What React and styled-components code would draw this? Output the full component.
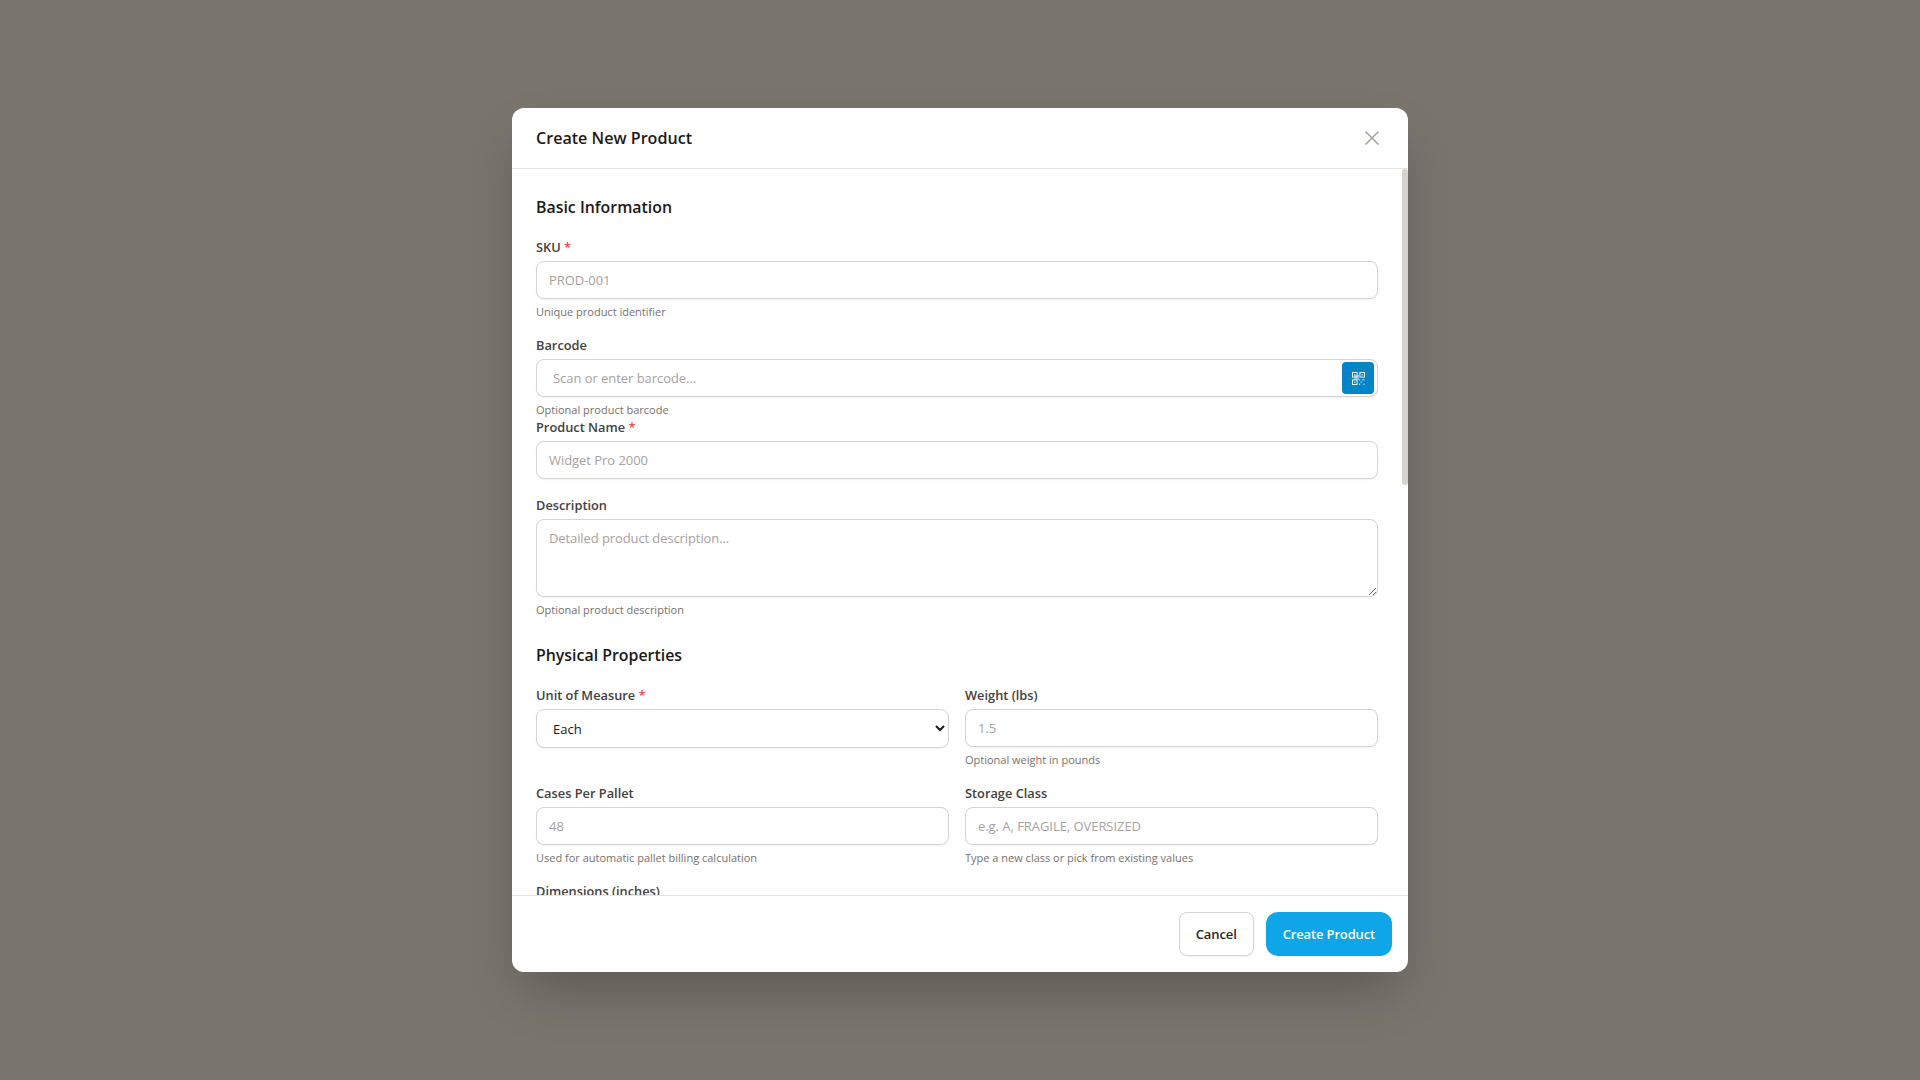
import React from "react";
import styled, { createGlobalStyle } from "styled-components";

const GlobalStyle = createGlobalStyle`
  html, body {
    margin: 0;
    padding: 0;
    height: 100%;
  }
  * {
    box-sizing: border-box;
  }
  body {
    font-family: "Open Sans", "Noto Sans", sans-serif;
  }
`;

function QrIcon() {
  return (
    <svg width="13" height="13" viewBox="0 0 13 13" fill="none">
      <rect x="2" y="3" width="5" height="5" fill="#fff" fillOpacity="0.45" />
      <g stroke="#fff" strokeWidth="0.9">
        <rect x="0.5" y="0.5" width="4.6" height="4.6" />
        <rect x="7.9" y="0.5" width="4.6" height="4.6" />
        <rect x="0.5" y="7.9" width="4.6" height="4.6" />
      </g>
      <g fill="#fff">
        <rect x="2.2" y="2.2" width="1.2" height="1.2" />
        <rect x="9.6" y="2.2" width="1.2" height="1.2" />
        <rect x="2.2" y="9.6" width="1.2" height="1.2" />
        <rect x="7" y="7.4" width="1.2" height="1.2" fillOpacity="0.8" />
        <rect x="10" y="7.4" width="2.6" height="1" fillOpacity="0.8" />
        <rect x="8.6" y="9.6" width="1.2" height="1.2" fillOpacity="0.8" />
        <rect x="7" y="11.6" width="1.2" height="1.2" fillOpacity="0.8" />
        <rect x="11.4" y="11.6" width="1.2" height="1.2" fillOpacity="0.8" />
      </g>
    </svg>
  );
}

function Field({ label, required, hint, flush, children }) {
  return (
    <FieldWrap $flush={flush}>
      <Label>
        {label}
        {required && <Required> *</Required>}
      </Label>
      {children}
      {hint && <Hint>{hint}</Hint>}
    </FieldWrap>
  );
}

export default function App() {
  return (
    <>
      <GlobalStyle />
      <Backdrop>
        <Modal>
          <Header>
            <Title>Create New Product</Title>
            <CloseButton aria-label="Close">
              <svg width="24" height="24" viewBox="0 0 24 24" fill="none" stroke="currentColor" strokeWidth="1.5">
                <path d="M5.5 18.5L18.5 5.5M5.5 5.5l13 13" />
              </svg>
            </CloseButton>
          </Header>
          <Body>
            <Section>
              <SectionTitle>Basic Information</SectionTitle>
              <Field label="SKU" required hint="Unique product identifier">
                <Input placeholder="PROD-001" />
              </Field>
              <Field label="Barcode" hint="Optional product barcode">
                <ScanRow>
                  <Input $wide placeholder="Scan or enter barcode..." />
                  <ScanButton aria-label="Scan barcode">
                    <QrIcon />
                  </ScanButton>
                </ScanRow>
              </Field>
              <Field flush label="Product Name" required>
                <Input placeholder="Widget Pro 2000" />
              </Field>
              <Field label="Description" hint="Optional product description">
                <TextArea rows={3} placeholder="Detailed product description..." />
              </Field>
            </Section>
            <Section>
              <SectionTitle>Physical Properties</SectionTitle>
              <TwoColumns>
                <Field label="Unit of Measure" required>
                  <Select defaultValue="Each">
                    <option>Each</option>
                    <option>Case</option>
                    <option>Pallet</option>
                  </Select>
                </Field>
                <Field label="Weight (lbs)" hint="Optional weight in pounds">
                  <Input placeholder="1.5" />
                </Field>
                <Field label="Cases Per Pallet" hint="Used for automatic pallet billing calculation">
                  <Input placeholder="48" />
                </Field>
                <Field label="Storage Class" hint="Type a new class or pick from existing values">
                  <Input placeholder="e.g. A, FRAGILE, OVERSIZED" />
                </Field>
              </TwoColumns>
              <Field label="Dimensions (inches)">
                <ThreeColumns>
                  <Input placeholder="Length" />
                  <Input placeholder="Width" />
                  <Input placeholder="Height" />
                </ThreeColumns>
              </Field>
            </Section>
          </Body>
          <ScrollThumb />
          <Footer>
            <CancelButton>Cancel</CancelButton>
            <PrimaryButton>Create Product</PrimaryButton>
          </Footer>
        </Modal>
      </Backdrop>
    </>
  );
}

const Backdrop = styled.div`
  min-height: 100vh;
  background: #79746c;
  display: flex;
  align-items: center;
  justify-content: center;
`;

const Modal = styled.div`
  position: relative;
  width: 896px;
  height: 864px;
  background: #fff;
  border-radius: 12px;
  box-shadow: 0 25px 50px -12px rgba(0, 0, 0, 0.25);
  display: flex;
  flex-direction: column;
  overflow: hidden;
`;

const Header = styled.div`
  height: 61px;
  flex-shrink: 0;
  padding: 0 24px;
  border-bottom: 1px solid #e7e5e4;
  display: flex;
  align-items: center;
  justify-content: space-between;
`;

const Title = styled.h2`
  margin: 0;
  font-size: 16.1px;
  line-height: 28px;
  font-weight: 600;
  color: #1c1917;
`;

const CloseButton = styled.button`
  width: 24px;
  height: 24px;
  padding: 0;
  border: none;
  background: none;
  color: #a8a29e;
  display: flex;
  align-items: center;
  justify-content: center;
`;

const Body = styled.div`
  flex: 1;
  min-height: 0;
  overflow: hidden;
  padding: 24px 30px 24px 24px;
  display: flex;
  flex-direction: column;
  gap: 24px;
`;

/* the headless browser hides real scrollbars, so the thumb is drawn over the body */
const ScrollThumb = styled.div`
  position: absolute;
  top: 61px;
  right: 0;
  width: 6px;
  height: 316px;
  border-radius: 3px;
  background: #d6d3ce;
`;

const Section = styled.section`
  display: flex;
  flex-direction: column;
  gap: 16px;
  flex-shrink: 0;
`;

const SectionTitle = styled.h3`
  margin: 0;
  font-size: 15.9px;
  line-height: 28px;
  font-weight: 600;
  color: #1c1917;
`;

const FieldWrap = styled.div`
  display: flex;
  flex-direction: column;
  min-width: 0;
  margin-top: ${(p) => (p.$flush ? "-16px" : "0")};
`;

const Label = styled.label`
  font-size: 12.8px;
  line-height: 20px;
  font-weight: 600;
  color: #44403c;
  margin-bottom: 4px;
`;

const Required = styled.span`
  color: #ef4444;
`;

const Hint = styled.p`
  margin: 5px 0 -1px;
  font-size: 11px;
  line-height: 16px;
  color: #78716c;
`;

const Input = styled.input`
  width: 100%;
  height: 38px;
  padding: 0 ${(p) => (p.$wide ? "44px" : "12px")} 0 ${(p) => (p.$wide ? "16px" : "12px")};
  border: 1px solid #d6d3d1;
  border-radius: 8px;
  background: #fff;
  box-shadow: 0 1px 2px rgba(0, 0, 0, 0.05);
  font-family: inherit;
  font-size: 13px;
  letter-spacing: -0.05px;
  color: #1c1917;
  outline: none;

  &::placeholder {
    color: #a8a29e;
  }
`;

const TextArea = styled.textarea`
  display: block;
  width: 100%;
  height: 78px;
  padding: 8px 12px;
  border: 1px solid #d6d3d1;
  border-radius: 8px;
  background: #fff;
  box-shadow: 0 1px 2px rgba(0, 0, 0, 0.05);
  font-family: inherit;
  font-size: 13px;
  letter-spacing: -0.1px;
  line-height: 20px;
  resize: vertical;
  outline: none;

  &::placeholder {
    color: #a8a29e;
  }
`;

const Select = styled.select`
  width: 100%;
  height: 39px;
  padding: 0 0 0 12px;
  border: 1px solid #d6d3d1;
  border-radius: 8px;
  background: #fff;
  box-shadow: 0 1px 2px rgba(0, 0, 0, 0.05);
  font-family: inherit;
  font-size: 13px;
  color: #1c1917;
  outline: none;
`;

const ScanRow = styled.div`
  position: relative;
`;

const ScanButton = styled.button`
  position: absolute;
  top: 3px;
  right: 4px;
  width: 32px;
  height: 32px;
  padding: 0;
  border: none;
  border-radius: 4px;
  background: #0284c7;
  color: #fff;
  display: flex;
  align-items: center;
  justify-content: center;
`;

const TwoColumns = styled.div`
  display: grid;
  grid-template-columns: 1fr 1fr;
  gap: 16px;
`;

const ThreeColumns = styled.div`
  display: grid;
  grid-template-columns: repeat(3, 1fr);
  gap: 16px;
`;

const Footer = styled.div`
  flex-shrink: 0;
  height: 77px;
  padding: 16px;
  border-top: 1px solid #e7e5e4;
  display: flex;
  justify-content: flex-end;
  gap: 12px;
`;

const CancelButton = styled.button`
  height: 44px;
  padding: 0 16px;
  border: 1px solid #d6d3d1;
  border-radius: 8px;
  background: #fff;
  box-shadow: 0 1px 2px rgba(0, 0, 0, 0.05);
  font-family: inherit;
  font-size: 13px;
  font-weight: 600;
  letter-spacing: -0.1px;
  color: #292524;
`;

const PrimaryButton = styled.button`
  height: 44px;
  padding: 0 17px;
  border: none;
  border-radius: 12px;
  background: #0ea5e9;
  font-family: inherit;
  font-size: 13px;
  font-weight: 600;
  letter-spacing: -0.15px;
  color: #fff;
`;
